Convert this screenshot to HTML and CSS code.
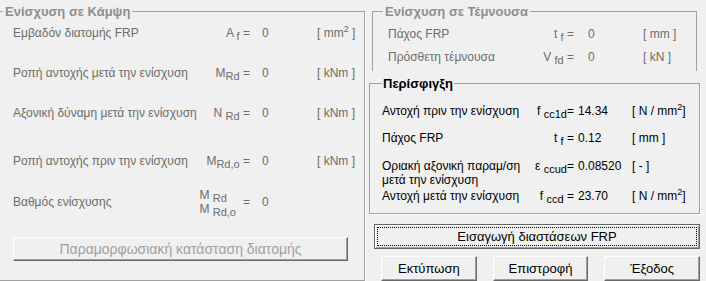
FILE: index.html
```html
<!DOCTYPE html>
<html>
<head>
  <meta charset="utf-8">
  <title>Ενίσχυση με FRP</title>
  <link rel="stylesheet" href="styles.css">
</head>
<body>
  <div class="window">
    <fieldset class="group bend">
      <legend>Ενίσχυση σε Κάμψη</legend>
      <div class="row">
        <span class="label">Εμβαδόν διατομής FRP</span>
        <span class="sym">A <sub>f</sub> =</span>
        <span class="val">0</span>
        <span class="unit">[ mm<sup>2</sup> ]</span>
      </div>
      <div class="row gap20">
        <span class="label">Ροπή αντοχής μετά την ενίσχυση</span>
        <span class="sym">M<sub>Rd</sub> =</span>
        <span class="val">0</span>
        <span class="unit">[ kNm ]</span>
      </div>
      <div class="row gap20">
        <span class="label">Αξονική δύναμη μετά την ενίσχυση</span>
        <span class="sym">N <sub>Rd</sub> =</span>
        <span class="val">0</span>
        <span class="unit">[ kNm ]</span>
      </div>
      <div class="row gap28">
        <span class="label">Ροπή αντοχής πριν την ενίσχυση</span>
        <span class="sym">M<sub>Rd,o</sub> =</span>
        <span class="val">0</span>
        <span class="unit">[ kNm ]</span>
      </div>
      <div class="row ratio">
        <span class="label">Βαθμός ενίσχυσης</span>
        <span class="sym">
          <span class="frac">
            <span>M <sub>Rd</sub></span>
            <span>M <sub>Rd,o</sub></span>
          </span>
          <span class="eq">=</span>
        </span>
        <span class="val">0</span>
        <span class="unit"></span>
      </div>
      <button type="button" class="btn btn-off" disabled>Παραμορφωσιακή κατάσταση διατομής</button>
    </fieldset>

    <div class="side">
      <fieldset class="group shear">
        <legend>Ενίσχυση σε Τέμνουσα</legend>
        <div class="row">
          <span class="label">Πάχος FRP</span>
          <span class="sym">t <sub>f</sub> =</span>
          <span class="val">0</span>
          <span class="unit">[ mm ]</span>
        </div>
        <div class="row">
          <span class="label">Πρόσθετη τέμνουσα</span>
          <span class="sym">V <sub>fd</sub> =</span>
          <span class="val">0</span>
          <span class="unit">[ kN ]</span>
        </div>
      </fieldset>

      <fieldset class="group conf">
        <legend>Περίσφιγξη</legend>
        <div class="row">
          <span class="label">Αντοχή πριν την ενίσχυση</span>
          <span class="sym">f <sub>cc1d</sub>=</span>
          <span class="val">14.34</span>
          <span class="unit">[ N / mm<sup>2</sup>]</span>
        </div>
        <div class="row gap9">
          <span class="label">Πάχος FRP</span>
          <span class="sym">t <sub>f</sub> =</span>
          <span class="val">0.12</span>
          <span class="unit">[ mm ]</span>
        </div>
        <div class="row two gap12">
          <span class="label">Οριακή αξονική παραμ/ση<br>μετά την ενίσχυση</span>
          <span class="sym">ε <sub>ccud</sub>=</span>
          <span class="val">0.08520</span>
          <span class="unit">[ - ]</span>
        </div>
        <div class="row">
          <span class="label">Αντοχή μετά την ενίσχυση</span>
          <span class="sym">f <sub>ccd</sub> =</span>
          <span class="val">23.70</span>
          <span class="unit">[ N / mm<sup>2</sup>]</span>
        </div>
      </fieldset>

      <button type="button" class="btn btn-main">Εισαγωγή διαστάσεων FRP</button>
      <div class="actions">
        <button type="button" class="btn">Εκτύπωση</button>
        <button type="button" class="btn">Επιστροφή</button>
        <button type="button" class="btn">Έξοδος</button>
      </div>
    </div>
  </div>
</body>
</html>
```

FILE: styles.css
```css
body {
  margin: 0;
  width: 706px;
  height: 281px;
  overflow: hidden;
  background: #f0f0f0;
  font-family: "Liberation Sans", Arial, sans-serif;
  font-size: 12px;
  color: #6d6d6d;
}
.window {
  display: flex;
}
fieldset {
  margin: 0;
  min-width: 0;
  box-sizing: border-box;
  border: 1px solid #a0a0a0;
  box-shadow: 1px 1px 0 #fff;
}
legend {
  font-size: 13px;
  font-weight: bold;
  line-height: 15px;
  color: #8e8e8e;
  padding: 0 2px;
}
sub {
  font-size: 11px;
  line-height: 0;
  vertical-align: -3px;
}
sup {
  font-size: 9px;
  line-height: 0;
  vertical-align: 5px;
}
.row {
  display: grid;
  align-items: center;
  height: 20px;
  white-space: nowrap;
}
.sym {
  text-align: right;
}

/* left group */
.bend {
  width: 367px;
  margin: 4px 0 0 -2px;
  padding: 4px 0 12px 4px;
}
.bend .row {
  grid-template-columns: 187px 50px 67px auto;
  padding-left: 10px;
}
.bend .val {
  padding-left: 12px;
}
.gap20 {
  margin-top: 20px;
}
.gap28 {
  margin-top: 28px;
}
.bend .ratio {
  height: 28px;
  margin-top: 17px;
}
.ratio .sym {
  display: flex;
  justify-content: flex-end;
  align-items: center;
}
.frac {
  display: flex;
  flex-direction: column;
  line-height: 14px;
  text-align: left;
  margin-right: 7px;
}

/* buttons */
.btn {
  padding: 0;
  font-family: "Liberation Sans", Arial, sans-serif;
  font-size: 13px;
  color: #000;
  background: #f0f0f0;
  border: 1px solid;
  border-color: #fff #696969 #696969 #fff;
  box-shadow: inset -1px -1px 0 #a0a0a0;
  border-radius: 0;
}
.btn-off {
  display: block;
  width: 335px;
  height: 24px;
  margin: 21px 0 0 10px;
  font-size: 14px;
  color: #a0a0a0;
}

/* right side */
.side {
  width: 332px;
  margin-left: 3px;
}
.shear {
  margin: 4px 3px 0 4px;
  padding: 6px 0 5px 10px;
  border-bottom: 0;
  box-shadow: none;
}
.shear .row {
  grid-template-columns: 142px 44px 69px auto;
  height: 18px;
  padding-left: 5px;
}
.shear .row + .row {
  margin-top: 5px;
}
.shear .val {
  padding-left: 14px;
}
.conf {
  width: 331px;
  margin: 5px 0 0 1px;
  padding: 11px 0 8px 12px;
  color: #000;
}
.conf legend {
  color: #000;
  padding: 0 1px;
}
.conf .row {
  grid-template-columns: 138px 54px 56px auto;
  height: 18px;
}
.conf .val {
  padding-left: 4px;
}
.conf .unit {
  padding-left: 2px;
}
.gap9 {
  margin-top: 9px;
}
.gap12 {
  margin-top: 12px;
}
.conf .two {
  height: 28px;
  align-items: start;
  line-height: 14px;
}
.btn-main {
  display: block;
  width: 326px;
  height: 25px;
  margin: 10px 0 0 6px;
  border-color: #646464;
  box-shadow: inset 1px 1px 0 #fff, inset -1px -1px 0 #a0a0a0;
  outline: 1px dotted #000;
  outline-offset: -4px;
}
.actions {
  display: flex;
  gap: 16px;
  margin: 7px 0 0 13px;
}
.actions .btn {
  width: 96px;
  height: 25px;
}
```
